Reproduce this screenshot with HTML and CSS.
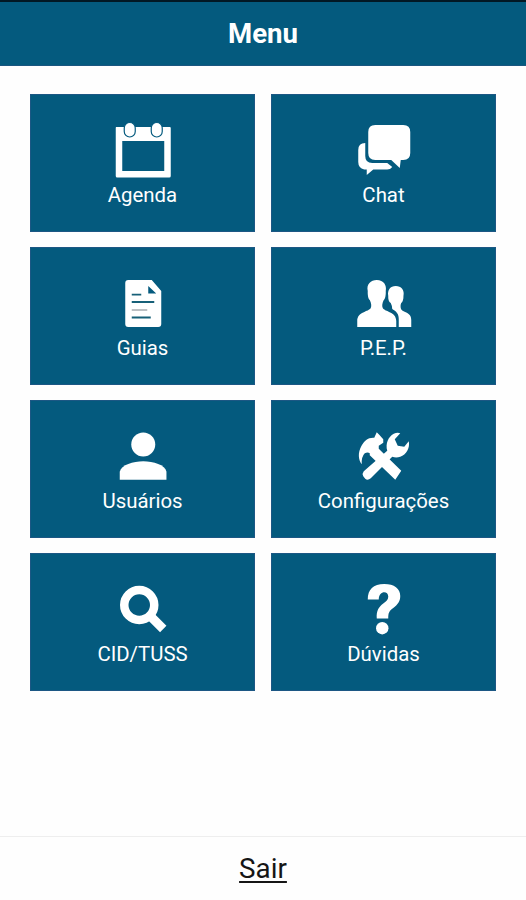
FILE: index.html
```html
<!DOCTYPE html>
<html lang="pt-BR">
<head>
<meta charset="utf-8">
<title>Menu</title>
<link rel="stylesheet" href="styles.css">
</head>
<body>
<header class="topbar"><h1>Menu</h1></header>
<main class="grid">
  <a class="tile">
    <svg class="icon" viewBox="109.75 118 66 60"><path fill-rule="evenodd" d="M116 127H169.500Q170.500 127 170.500 128V176Q170.500 177.500 169 177.500H117Q115.500 177.500 115.500 176V128Q115.500 127 116 127ZM122 141V171H164V141Z"/><g class="ring"><rect x="124" y="122.500" width="11" height="14.500" rx="5.500"/><rect x="151" y="122.500" width="11" height="14.500" rx="5.500"/></g></svg>
    <span>Agenda</span>
  </a>
  <a class="tile">
    <svg class="icon" viewBox="350.75 118 66 60"><path d="M375 125H403Q410 125 410 132V153Q410 160 403 160H400.500L399.500 168L391 160H375Q368 160 368 153V132Q368 125 375 125Z"/><path d="M365 143V156Q365 163 372 163H387L392 167Q390 169.500 387 169.500H373L366.500 175V169.500H364Q358 168 358 162V150Q358 143 365 143Z"/></svg>
    <span>Chat</span>
  </a>
  <a class="tile">
    <svg class="icon" viewBox="109.75 271 66 60"><path fill-rule="evenodd" d="M128 280H151.500L161 291V324Q161 327 158 327H128Q125 327 125 324V283Q125 280 128 280ZM148 286V293.500H156Z"/><path class="line" d="M131.500 294.700H141M131.500 302H154M131.500 317.500H150.500"/><path class="line faint" d="M131.500 310H147"/></svg>
    <span>Guias</span>
  </a>
  <a class="tile">
    <svg class="icon" viewBox="350.75 271 66 60"><path d="M392 309Q392 306 390.500 303C388.500 302 387.800 299 388 296C387 290 390 286 395.500 286S404.500 290 403.200 296C403.300 299 402.500 302 401 303C400 305 400 309 402 310.500C407 313 411 314 411 320V327H398.500V319C398.500 313.500 396 311.500 392 309Z"/><path d="M376.500 280C383.500 280 386.500 285 385.500 291C385.700 295 385 299 383.500 300C382 303 381.500 306 382.500 308C384.500 312 396 311.500 396 321V327H357V321C357 311.500 368.500 312 370.500 308C371.500 306 371 303 369.500 300C368 299 367.300 295 367.500 291C366 284 370.500 280 376.500 280Z"/></svg>
    <span>P.E.P.</span>
  </a>
  <a class="tile">
    <svg class="icon" viewBox="109.75 424.250 66 60"><circle cx="143" cy="444.800" r="12"/><path d="M119.500 480V472C121 465 133 461.500 143 461.500S165 465 166.200 472V480Z"/></svg>
    <span>Usuários</span>
  </a>
  <a class="tile">
    <svg class="icon" viewBox="350.75 424.250 66 60"><path d="M374 438L376.500 432.500L379 435L383 439.500V443L378.500 446V449L401 471L395 480L369.500 455.500V453.500Q367.500 452 364.500 453.500Q361 457 361.500 464.500C358 460 357.500 453 361 446.500C364 441 368 437.500 374 438Z"/><path d="M363.500 471.500L387 451C385 444 388 437 393.500 434Q397 432.500 400 433.500L394.500 439.500L397.500 446L404 447L408.500 441.500C410 448 406 455 400 457Q396 458.500 392 457L370.500 478.500Q367.500 481 365 479L363 476.500Q361.500 474 363.500 471.500Z"/></svg>
    <span>Configurações</span>
  </a>
  <a class="tile">
    <svg class="icon" viewBox="109.75 577.500 66 60"><circle class="lens" cx="139" cy="605.500" r="15"/><path class="handle" d="M150 616.500L163 629.500"/></svg>
    <span>CID/TUSS</span>
  </a>
  <a class="tile">
    <svg class="icon" viewBox="350.75 577.500 66 60"><path d="M367.500 600C367.500 590 373 584.500 384 584.500C394 584.500 400 589 400 596.500C400 602 397.500 605 393 608.500C389 611.500 388 613 388 619H376.500C376 611 378.500 607.500 383 604C386.500 601.500 388 600 388 597C388 591 378.500 591 378.500 600Z"/><circle cx="382" cy="628.700" r="6.200"/></svg>
    <span>Dúvidas</span>
  </a>
</main>
<footer class="footer"><a class="exit">Sair</a></footer>
</body>
</html>
```
FILE: styles.css
```css
* { box-sizing: border-box; }
body {
  margin: 0;
  height: 900px;
  display: flex;
  flex-direction: column;
  background: #fefefe;
  font-family: Roboto, sans-serif;
}
.topbar {
  height: 66px;
  border-top: 2px solid #021824;
  border-bottom: 1px solid #1a5680;
  background: #045a7e;
  color: #fff;
  display: flex;
  align-items: center;
  justify-content: center;
}
h1 { margin: 0; font-size: 27.6px; font-weight: 700; line-height: 32px; }
.grid {
  flex: 1;
  display: grid;
  grid-template-columns: repeat(2, 225.5px);
  grid-auto-rows: 138px;
  align-content: start;
  justify-content: center;
  gap: 15.1px 15.5px;
  padding-top: 28px;
}
.tile {
  display: flex;
  flex-direction: column;
  align-items: center;
  padding-top: 23px;
  background: #045a7e;
  border: 1px solid #1c5784;
  color: #fff;
  font-size: 20.4px;
  line-height: 24px;
}
.tile span { margin-top: 5px; }
.icon { width: 66px; height: 60px; fill: #fff; flex: none; }
.ring { stroke: #045a7e; stroke-width: 1.2; }
.line { stroke: #176078; stroke-width: 1.8; }
.faint { stroke: #b5b9bd; }
.lens { fill: none; stroke: #fff; stroke-width: 8.5; }
.handle { stroke: #fff; stroke-width: 9; }
.footer {
  height: 64px;
  border-top: 1px solid #eee;
  display: flex;
  align-items: center;
  justify-content: center;
}
.exit {
  color: #151515;
  font-size: 27.8px;
  line-height: 32px;
  text-decoration: underline;
  text-decoration-thickness: 2px;
  text-underline-offset: 3px;
}
```
